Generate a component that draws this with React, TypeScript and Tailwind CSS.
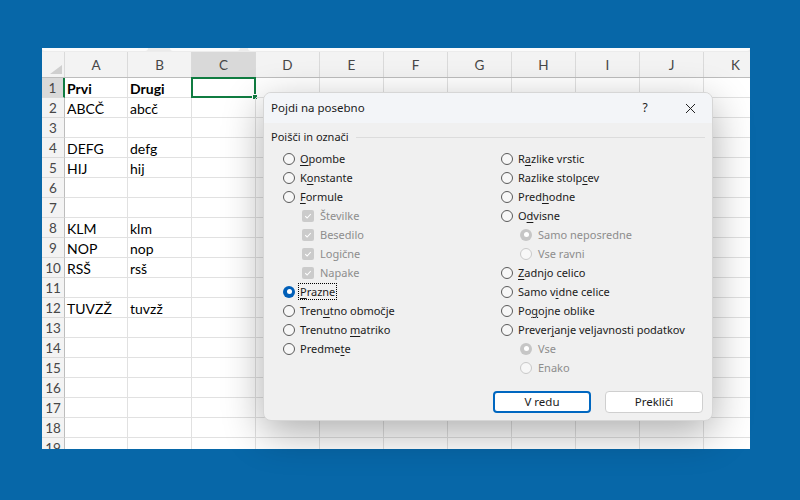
import clsx from "clsx";

type Opt = {
  label: string;
  kind: "radio" | "check" | "sub";
  checked?: boolean;
  disabled?: boolean;
  focus?: boolean;
};

const LEFT: Opt[] = [
  { label: "&Opombe", kind: "radio" },
  { label: "K&onstante", kind: "radio" },
  { label: "&Formule", kind: "radio" },
  { label: "Številke", kind: "check", checked: true, disabled: true },
  { label: "Besedilo", kind: "check", checked: true, disabled: true },
  { label: "Logične", kind: "check", checked: true, disabled: true },
  { label: "Napake", kind: "check", checked: true, disabled: true },
  { label: "&Prazne", kind: "radio", checked: true, focus: true },
  { label: "Tren&utno območje", kind: "radio" },
  { label: "Trenutno &matriko", kind: "radio" },
  { label: "Predme&te", kind: "radio" },
];

const RIGHT: Opt[] = [
  { label: "R&azlike vrstic", kind: "radio" },
  { label: "Razlike stolp&cev", kind: "radio" },
  { label: "Pred&hodne", kind: "radio" },
  { label: "O&dvisne", kind: "radio" },
  { label: "Samo neposredne", kind: "sub", checked: true, disabled: true },
  { label: "Vse ravni", kind: "sub", disabled: true },
  { label: "&Zadnjo celico", kind: "radio" },
  { label: "Samo v&idne celice", kind: "radio" },
  { label: "Po&gojne oblike", kind: "radio" },
  { label: "Prever&janje veljavnosti podatkov", kind: "radio" },
  { label: "Vse", kind: "sub", checked: true, disabled: true },
  { label: "Enako", kind: "sub", disabled: true },
];

const COLS = ["A", "B", "C", "D", "E", "F", "G", "H", "I", "J", "K"];

const CELLS: [string, string][] = [
  ["Prvi", "Drugi"],
  ["ABCČ", "abcč"],
  ["", ""],
  ["DEFG", "defg"],
  ["HIJ", "hij"],
  ["", ""],
  ["", ""],
  ["KLM", "klm"],
  ["NOP", "nop"],
  ["RSŠ", "rsš"],
  ["", ""],
  ["TUVZŽ", "tuvzž"],
  ["", ""],
  ["", ""],
  ["", ""],
  ["", ""],
  ["", ""],
  ["", ""],
  ["", ""],
];

function Label({ text }: { text: string }) {
  const i = text.indexOf("&");
  if (i < 0) return <>{text}</>;
  return (
    <>
      {text.slice(0, i)}
      <span className="underline decoration-1 underline-offset-[2px]">
        {text[i + 1]}
      </span>
      {text.slice(i + 2)}
    </>
  );
}

function RadioDot({ checked, disabled }: { checked?: boolean; disabled?: boolean }) {
  if (checked && !disabled) {
    return (
      <span className="flex size-[12px] shrink-0 items-center justify-center rounded-full bg-[#005fb8]">
        <span className="size-[5px] rounded-full bg-white" />
      </span>
    );
  }
  if (checked && disabled) {
    return (
      <span className="flex size-[12px] shrink-0 items-center justify-center rounded-full bg-[#c6c6c6]">
        <span className="size-[5px] rounded-full bg-white" />
      </span>
    );
  }
  return (
    <span
      className={clsx(
        "size-[12px] shrink-0 rounded-full border bg-[#f7f7f7]",
        disabled ? "border-[#c9c9c9]" : "border-[#5a5a5a]",
      )}
    />
  );
}

function CheckBox() {
  return (
    <span className="flex size-[12px] shrink-0 items-center justify-center rounded-[2px] bg-[#cbcbcb]">
      <svg width="8" height="8" viewBox="0 0 8 8" fill="none">
        <path d="M1.2 4.2 3.1 6 6.8 2" stroke="#fff" strokeWidth="1.1" />
      </svg>
    </span>
  );
}

function Option({ o }: { o: Opt }) {
  return (
    <div
      className={clsx(
        "flex h-[19px] items-center",
        o.kind === "radio" ? "gap-[5px]" : "gap-[6px] pl-[19px]",
        o.disabled ? "text-[#8d8d8d]" : "text-[#1b1b1b]",
      )}
    >
      {o.kind === "check" ? (
        <CheckBox />
      ) : (
        <RadioDot checked={o.checked} disabled={o.disabled} />
      )}
      <span
        className={clsx(
          "whitespace-nowrap leading-[15px]",
          o.focus ? "-ml-[2px] border border-dotted border-black px-[1px]" : "",
        )}
      >
        <Label text={o.label} />
      </span>
    </div>
  );
}

function Dialog() {
  return (
    <div className="absolute top-[92px] left-[263px] flex h-[329px] w-[450px] flex-col overflow-hidden rounded-[8px] border border-[#d6d6d6] bg-[#f0f0f0] font-['Noto_Sans',sans-serif] text-[11px] text-[#1b1b1b] shadow-[0_12px_40px_rgba(0,0,0,0.32)]">
      <div className="flex h-[30px] shrink-0 items-center bg-[#f3f5f8] pl-[7px]">
        <span className="flex-1 text-[11.5px]">Pojdi na posebno</span>
        <span className="w-[20px] text-center text-[12px]">?</span>
        <span className="ml-[29px] mr-[16px] flex w-[12px] justify-center">
          <svg width="11" height="11" viewBox="0 0 11 11" fill="none">
            <path d="M1 1 10 10M10 1 1 10" stroke="#222" strokeWidth="1" />
          </svg>
        </span>
      </div>
      <div className="flex flex-1 flex-col pt-[5px]">
        <div className="flex h-[19px] items-center gap-[7px] pl-[7px] pr-[7px]">
          <span className="text-[11px]">Poišči in označi</span>
          <span className="h-px flex-1 bg-[#dcdcdc]" />
        </div>
        <div className="flex pt-[2px] pl-[19px]">
          <div className="flex w-[218px] flex-col">
            {LEFT.map((o) => (
              <Option key={o.label} o={o} />
            ))}
          </div>
          <div className="flex flex-col">
            {RIGHT.map((o) => (
              <Option key={o.label} o={o} />
            ))}
          </div>
        </div>
        <div className="mt-auto flex justify-end gap-[14px] pr-[9px] pb-[7px]">
          <button className="h-[22px] w-[98px] rounded-[4px] border-2 border-[#0067c0] bg-white text-[11.5px] text-[#1b1b1b]">
            V redu
          </button>
          <button className="h-[22px] w-[98px] rounded-[4px] border border-[#cfcfcf] bg-white text-[11.5px] text-[#1b1b1b]">
            Prekliči
          </button>
        </div>
      </div>
    </div>
  );
}

function Sheet() {
  return (
    <div className="flex h-[401px] w-[708px] flex-col overflow-hidden bg-white font-['Lato',sans-serif]">
      <div className="relative flex h-[4px] shrink-0 bg-[#ececec]">
        <span className="h-[3px] w-[106px] rounded-b-[3px] bg-[#fbfbfb]" />
        <span className="ml-[22px] h-[3px] w-[70px] rounded-b-[3px] bg-[#fbfbfb]" />
        <span className="ml-[8px] h-[3px] flex-1 rounded-b-[3px] bg-[#fbfbfb]" />
      </div>
      <div className="flex h-[26px] shrink-0 border-b border-[#bdbdbd] bg-[#f3f3f3] text-[13.5px] text-[#474747]">
        <div className="flex w-[23px] shrink-0 items-end justify-end border-r border-[#dadada] pr-[2px] pb-[3px]">
          <svg width="12" height="9" viewBox="0 0 12 9">
            <path d="M12 0V9H0Z" fill="#cfcfcf" />
          </svg>
        </div>
        {COLS.map((c, i) => (
          <div
            key={c}
            className={clsx(
              "flex shrink-0 items-center justify-center border-r border-[#dadada] pt-[2px]",
              i === 0 ? "w-[63px]" : "w-[64px]",
              c === "C" ? "bg-[#d9d9d9]" : "",
            )}
          >
            {c}
          </div>
        ))}
      </div>
      {CELLS.map((r, ri) => (
        <div key={ri} className="flex h-[20px] shrink-0 text-[14px]">
          <div
            className={clsx(
              "flex w-[23px] shrink-0 items-center justify-center border-b border-[#dadada] pt-[2px] text-[13.5px] text-[#474747]",
              ri === 0
                ? "border-r-2 border-r-[#107c41] bg-[#d9d9d9]"
                : "border-r border-r-[#bdbdbd] bg-[#f3f3f3]",
            )}
          >
            {ri + 1}
          </div>
          {COLS.map((c, ci) => {
            const v = ci === 0 ? r[0] : ci === 1 ? r[1] : "";
            return (
              <div
                key={c}
                className={clsx(
                  "relative flex shrink-0 items-center border-r border-b border-[#e1e1e1] pt-[2px] pl-[2px] text-black",
                  ci === 0 ? "w-[63px]" : "w-[64px]",
                  ri === 0 ? "font-bold" : "",
                )}
              >
                {v}
                {ri === 0 && c === "C" ? (
                  <span className="absolute -top-px -left-px h-[21px] w-[65px] border-2 border-[#107c41]">
                    <span className="absolute -right-[4px] -bottom-[4px] size-[6px] border border-white bg-[#107c41]" />
                  </span>
                ) : null}
              </div>
            );
          })}
        </div>
      ))}
    </div>
  );
}

export default function App() {
  return (
    <div className="relative h-[500px] w-[800px] overflow-hidden bg-[#0767a8] pt-[48px] pl-[42px]">
      <Sheet />
      <Dialog />
    </div>
  );
}
